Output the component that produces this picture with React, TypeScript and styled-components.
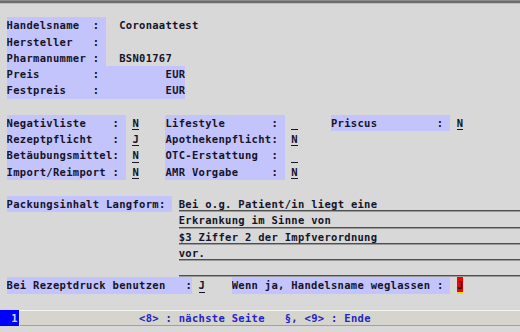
import React from "react";
import styled, { createGlobalStyle } from "styled-components";

// terminal grid: one column is 6.62px, one row 16.25px
const CW = 6.62;
const RH = 16.25;
const cols = (n: number) => `${(n * CW).toFixed(2)}px`;

const GlobalStyle = createGlobalStyle`
  html, body {
    margin: 0;
    padding: 0;
    background: #d8d8d8;
  }
`;

const Screen = styled.div`
  width: 520px;
  height: 332px;
  box-sizing: border-box;
  padding-top: 1px;
  overflow: hidden;
  background: #d8d8d8;
  box-shadow: inset 0 1px #8c8c8c, inset 0 3px #6c6c6c, inset 0 4px #bdbdbd;
  font-family: "DejaVu Sans Mono", monospace;
  font-weight: bold;
  font-size: 10.5px;
  letter-spacing: 0.3px;
  color: #14142a;
`;

const Row = styled.div<{ $flush?: boolean }>`
  display: flex;
  height: ${RH}px;
  line-height: ${RH}px;
  white-space: pre;
  padding-left: ${(p) => (p.$flush ? "0" : cols(1))};
`;

const Label = styled.span<{ $w: number }>`
  flex: none;
  width: ${(p) => cols(p.$w)};
  background: #c4c4fc;
  overflow: hidden;
`;

const Gap = styled.span<{ $w: number }>`
  flex: none;
  width: ${(p) => cols(p.$w)};
`;

const Text = styled.span`
  flex: none;
`;

const Value = styled.span`
  flex: none;
  width: ${cols(1)};
  background: linear-gradient(#14142a, #14142a) left bottom 1px / 100% 1px
    no-repeat;
`;

const Field = styled.span`
  flex: 1;
  box-shadow: inset 0 -1px #9c9c9c, inset 0 -2px #4e4e4e;
`;

const Cursor = styled.span`
  flex: none;
  width: ${cols(1)};
  background: #f80000;
  box-shadow: inset 0 -2px #f4dc00;
`;

const StatusBar = styled(Row)`
  background: #d5d5cd;
  box-shadow: inset 0 1px #f4f4f0, inset 0 -1px #a2a29c;
  color: #2424c4;
`;

const PageNo = styled.span`
  flex: none;
  width: ${cols(3)};
  box-sizing: border-box;
  text-align: right;
  padding-right: 2px;
  background: #0000ff;
  color: #d4d4ff;
  box-shadow: inset -1px 0 #e4e4f4;
`;

const StatusText = styled.span`
  padding-left: ${cols(18)};
`;

const Blank = () => <Row />;

type Check = { label: string; value: string };

const leftChecks: Check[] = [
  { label: "Negativliste    : ", value: "N" },
  { label: "Rezeptpflicht   : ", value: "J" },
  { label: "Betäubungsmittel: ", value: "N" },
  { label: "Import/Reimport : ", value: "N" },
];

const midChecks: Check[] = [
  { label: "Lifestyle       : ", value: " " },
  { label: "Apothekenpflicht: ", value: "N" },
  { label: "OTC-Erstattung  : ", value: " " },
  { label: "AMR Vorgabe     : ", value: "N" },
];

const langform = [
  "Bei o.g. Patient/in liegt eine",
  "Erkrankung im Sinne von",
  "$3 Ziffer 2 der Impfverordnung",
  "vor.",
  "",
];

export default function App() {
  return (
    <>
      <GlobalStyle />
      <Screen>
        <Blank />
        <Row>
          <Label $w={15}>Handelsname  : </Label>
          <Gap $w={2} />
          <Text>Coronaattest</Text>
        </Row>
        <Row>
          <Label $w={15}>Hersteller   : </Label>
        </Row>
        <Row>
          <Label $w={15}>Pharmanummer : </Label>
          <Gap $w={2} />
          <Text>BSN01767</Text>
        </Row>
        <Row>
          <Label $w={27}>Preis        :          EUR</Label>
        </Row>
        <Row>
          <Label $w={27}>Festpreis    :          EUR</Label>
        </Row>
        <Blank />
        {leftChecks.map((c, i) => (
          <Row key={c.label}>
            <Label $w={18}>{c.label}</Label>
            <Gap $w={1} />
            <Value>{c.value}</Value>
            <Gap $w={4} />
            <Label $w={18}>{midChecks[i].label}</Label>
            <Gap $w={1} />
            <Value>{midChecks[i].value}</Value>
            {i === 0 && (
              <>
                <Gap $w={5} />
                <Label $w={18}>Priscus         : </Label>
                <Gap $w={1} />
                <Value>N</Value>
              </>
            )}
          </Row>
        ))}
        <Blank />
        {langform.map((line, i) => (
          <Row key={i}>
            {i === 0 ? (
              <Label $w={25}>Packungsinhalt Langform: </Label>
            ) : (
              <Gap $w={25} />
            )}
            <Gap $w={1} />
            <Field>{line}</Field>
          </Row>
        ))}
        <Row>
          <Label $w={28}>Bei Rezeptdruck benutzen   :</Label>
          <Gap $w={1} />
          <Value>J</Value>
          <Gap $w={4} />
          <Label $w={33}>Wenn ja, Handelsname weglassen : </Label>
          <Gap $w={1} />
          <Cursor>J</Cursor>
        </Row>
        <Blank />
        <StatusBar $flush>
          <PageNo>1</PageNo>
          <StatusText>{"<8> : nächste Seite   §, <9> : Ende"}</StatusText>
        </StatusBar>
      </Screen>
    </>
  );
}
